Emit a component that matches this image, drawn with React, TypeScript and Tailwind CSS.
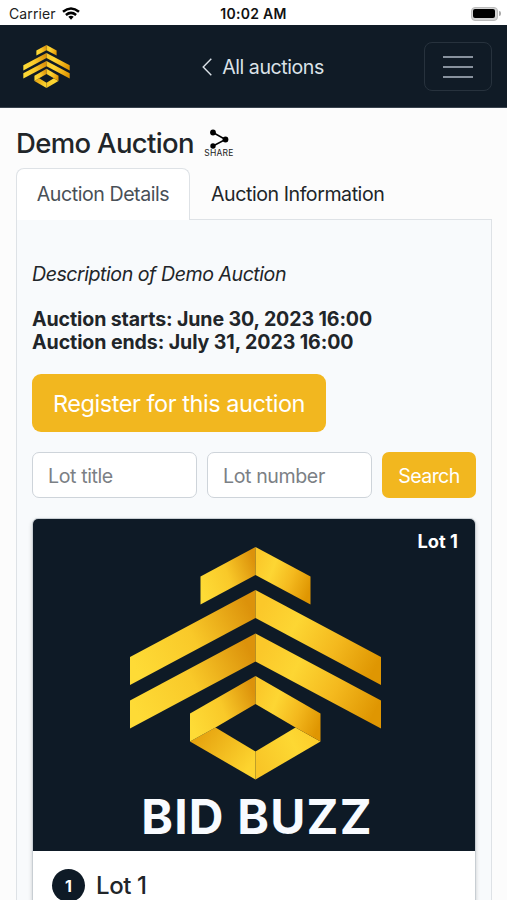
import React from "react";

function Logo({ id, className }: { id: string; className: string }) {
  const left = `url(#${id}-left)`;
  const right = `url(#${id}-right)`;
  const base = `url(#${id}-base)`;
  const rise = `url(#${id}-rise)`;
  return (
    <svg viewBox="0 0 251 233" className={className} aria-label="Bid Buzz">
      <defs>
        <linearGradient id={`${id}-left`} x1="0" y1="0.7" x2="1" y2="0.3">
          <stop offset="0" stopColor="#fedb36" />
          <stop offset="0.5" stopColor="#f9c929" />
          <stop offset="1" stopColor="#dc920b" />
        </linearGradient>
        <linearGradient id={`${id}-right`} x1="0" y1="0.3" x2="1" y2="0.7">
          <stop offset="0" stopColor="#fbc82a" />
          <stop offset="0.3" stopColor="#fdd633" />
          <stop offset="0.65" stopColor="#f4b91e" />
          <stop offset="1" stopColor="#df9602" />
        </linearGradient>
        <linearGradient id={`${id}-base`} x1="0" y1="0" x2="1" y2="0.6">
          <stop offset="0" stopColor="#e29a09" />
          <stop offset="1" stopColor="#fdd42f" />
        </linearGradient>
        <linearGradient id={`${id}-rise`} x1="0" y1="0.6" x2="1" y2="0.2">
          <stop offset="0" stopColor="#f8c627" />
          <stop offset="0.6" stopColor="#fdd833" />
          <stop offset="1" stopColor="#fccb29" />
        </linearGradient>
      </defs>
      <path fill={left} d="M70.5 29.5 125.5 0v28l-55 29.5z" />
      <path fill={right} d="m125.5 0 55 29.5v28l-55-29.5z" />
      <path fill={left} d="M0 110 125.5 43v28L0 138z" />
      <path fill={right} d="M125.5 43 251 110v28L125.5 71z" />
      <path fill={left} d="M0 153.5 125.5 86.5v28L0 181.5z" />
      <path fill={right} d="m125.5 86.5 125.5 67v28l-125.5-67z" />
      <path fill={base} d="m60 194.5 25.500-14 40 24v28z" />
      <path fill={rise} d="m125.500 204.500 40-24 25 14-65 38z" />
      <path fill={left} d="m60 166.500 65.500-37.500v28l-40 23.500-25.500 14z" />
      <path fill={right} d="m125.500 129 65 37.500v28l-25-14-40-23.500z" />
    </svg>
  );
}

function StatusBar() {
  return (
    <div className="flex h-[25px] shrink-0 items-center justify-between bg-white pl-[9px] pr-[6px] pt-[2px] text-black">
      <div className="flex w-[90px] items-center gap-[6px] text-[14px] tracking-[0.1px] text-[#222]">
        <span>Carrier</span>
        <svg viewBox="0 0 18 13" className="h-[13px] w-[18px]" fill="none" stroke="#000" strokeWidth="2.5">
          <path d="M1 4.800Q9-1.800 17 4.800" />
          <path d="M3.900 8Q9 3.700 14.100 8" />
          <path d="M6.300 9.700Q9 7.700 11.700 9.700L9 12.700Z" fill="#000" stroke="none" />
        </svg>
      </div>
      <div className="pr-[3px] text-[14px] font-semibold tracking-[0.3px] text-[#111]">10:02 AM</div>
      <div className="flex w-[90px] items-center justify-end gap-px">
        <div className="h-[14px] w-[27px] rounded-[4px] border border-[#bbb] bg-[#d5d5d5] p-[1.5px]">
          <div className="h-full w-full rounded-[2px] bg-black" />
        </div>
        <div className="h-[5px] w-[2px] rounded-r-full bg-[#aaa]" />
      </div>
    </div>
  );
}

function Navbar() {
  return (
    <header className="flex h-[83px] shrink-0 items-center justify-between border-b border-[#39434e] bg-[#101b26] pl-[23px] pr-[15px] pt-[1px]">
      <Logo id="nav" className="h-[43px] w-[47px]" />
      <a className="flex items-center gap-[10px] pl-[32px] pt-[2px] text-[19.6px] text-[#dbe2e8]">
        <svg viewBox="0 0 10 18" className="h-[18px] w-[10px]" fill="none" stroke="currentColor" strokeWidth="1.4">
          <path d="M9.300.800 1.200 9l8.100 8.200" />
        </svg>
        <span className="tracking-[-0.45px]">All auctions</span>
      </a>
      <button className="flex h-[49px] w-[68px] flex-col items-center justify-center gap-[8px] rounded-[8px] border border-[#27323d]">
        <span className="h-[2px] w-[30px] bg-[#87919d]" />
        <span className="h-[2px] w-[30px] bg-[#87919d]" />
        <span className="h-[2px] w-[30px] bg-[#87919d]" />
      </button>
    </header>
  );
}

function ShareIcon() {
  return (
    <div className="flex w-[30px] flex-col items-center">
      <svg viewBox="0 0 20 20" className="h-[20px] w-[20px]">
        <path d="m4 3.500 12.500 7L4 17" fill="none" stroke="#000" strokeWidth="1.5" />
        <circle cx="4" cy="3.500" r="2.900" />
        <circle cx="16.500" cy="10.500" r="2.900" />
        <circle cx="4" cy="17" r="2.700" />
      </svg>
      <span className="text-[8.5px] leading-[9px] tracking-[0.2px] text-[#222]">SHARE</span>
    </div>
  );
}

export default function App() {
  return (
    <div className="flex h-[900px] w-[507px] flex-col overflow-hidden bg-[#fcfcfc] font-['Inter','Liberation_Sans',sans-serif] text-[#212529]">
      <StatusBar />
      <Navbar />
      <main className="flex shrink-0 flex-col pl-[16px] pr-[15px] pt-[18px]">
        <div className="flex h-[34px] items-center gap-[10px]">
          <h1 className="text-[27.5px] font-medium leading-[34px] tracking-[-0.65px]">Demo Auction</h1>
          <ShareIcon />
        </div>
        <div className="mt-[8px] flex h-[52px]">
          <div className="flex w-[174px] items-center justify-center rounded-t-[8px] border border-b-0 border-[#dee2e6] bg-white pt-[1px] text-[19.6px] tracking-[-0.45px] text-[#495057]">
            Auction Details
          </div>
          <div className="flex grow items-center border-b border-[#dee2e6] pl-[21px] pt-[3px] text-[19.6px] tracking-[-0.45px]">
            Auction Information
          </div>
        </div>
        <section className="border-x border-[#dee2e6] bg-[#f8fafc] px-[15px] pt-[43px] text-[19.6px] leading-[23px]">
          <p className="italic tracking-[-0.47px]">Description of Demo Auction</p>
          <p className="mt-[22px] font-bold tracking-[-0.12px]">Auction starts: June 30, 2023 16:00</p>
          <p className="font-bold tracking-[-0.1px]">Auction ends: July 31, 2023 16:00</p>
          <button className="mt-[20px] flex h-[58px] w-[294px] items-center justify-center rounded-[9px] bg-[#f2b71f] text-[23.5px] tracking-[-0.45px] text-white">
            Register for this auction
          </button>
          <div className="mt-[20px] flex h-[46px] gap-[10px] tracking-[-0.4px]">
            <div className="flex w-[165px] items-center rounded-[7px] border border-[#ced4da] bg-white pl-[15px] pt-[2px] text-[#7b8085]">
              Lot title
            </div>
            <div className="flex w-[165px] items-center rounded-[7px] border border-[#ced4da] bg-white pl-[15px] pt-[2px] text-[#7b8085]">
              Lot number
            </div>
            <button className="flex grow items-center justify-center rounded-[7px] bg-[#f2b71f] pt-[2px] tracking-[-0.6px] text-white">
              Search
            </button>
          </div>
          <article className="mt-[20px] h-[420px] rounded-[6px] border border-[#c8ced3] bg-white shadow-[0_2px_4px_rgba(0,0,0,0.18)]">
            <div className="relative flex h-[332px] flex-col items-center rounded-t-[5px] bg-[#0e1a26] pl-[2px] pt-[28px]">
              <span className="absolute right-[17px] top-[11px] text-[18.3px] font-bold text-white">Lot 1</span>
              <Logo id="lot" className="h-[233px] w-[251px]" />
              <div className="mt-[8px] whitespace-nowrap pl-[4px] text-[48px] font-bold leading-[58px] tracking-[1.2px] text-[#f8fbff]">
                BID BUZZ
              </div>
            </div>
            <div className="flex items-center gap-[11px] pl-[19px] pt-[18px]">
              <span className="flex h-[33px] w-[33px] items-center justify-center rounded-full bg-[#0e1a26] pt-px text-[16px] font-bold text-white">
                1
              </span>
              <span className="text-[24px] font-medium tracking-[-0.4px]">Lot 1</span>
            </div>
          </article>
        </section>
      </main>
    </div>
  );
}
